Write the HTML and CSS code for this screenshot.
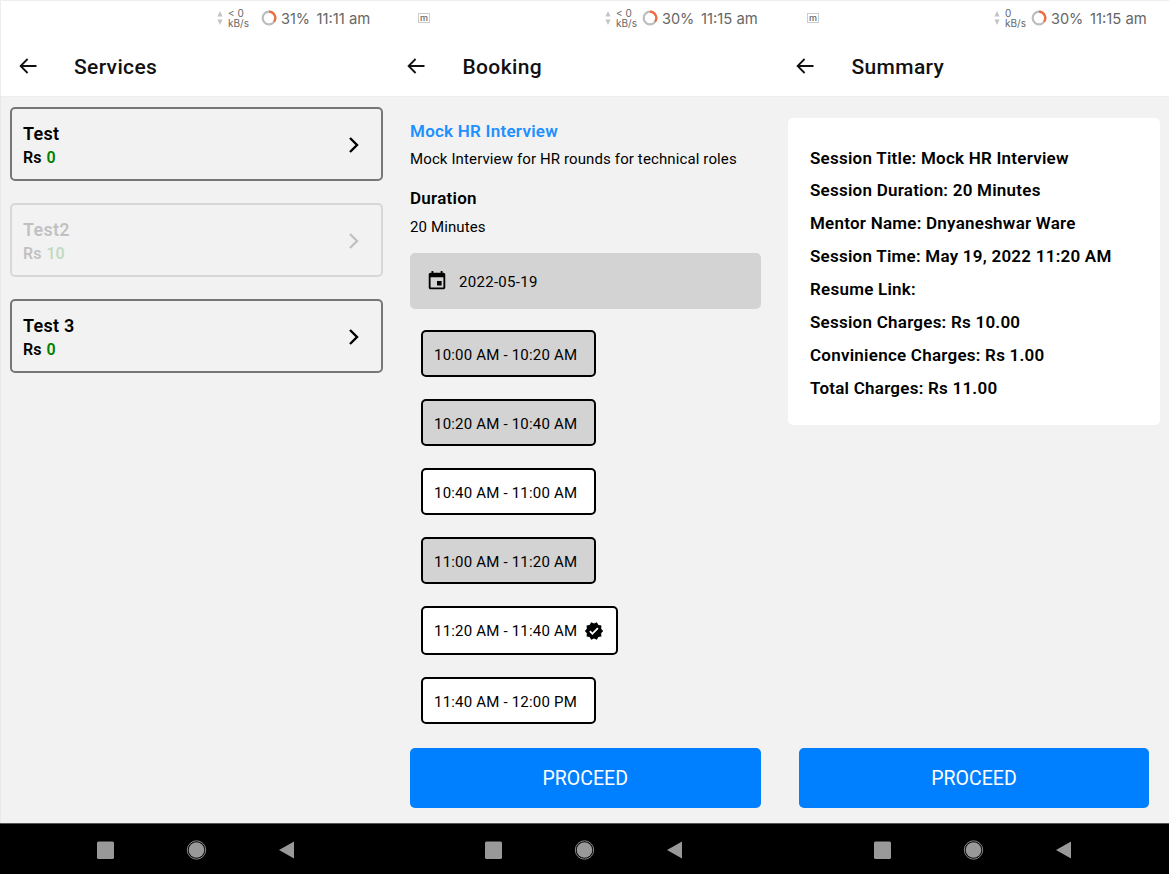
FILE: index.html
```html
<!DOCTYPE html>
<html lang="en">
<head>
<meta charset="utf-8">
<title>Session booking</title>
<link rel="stylesheet" href="styles.css">
</head>
<body>
<svg class="defs" width="0" height="0">
  <symbol id="back" viewBox="0 0 18 16"><path d="M17.500 8H1.6M8.6 1 1.6 8l7 7" fill="none" stroke="#111" stroke-width="1.8"/></symbol>
  <symbol id="chevron" viewBox="0 0 10 16"><path d="M1 1l7 7-7 7" fill="none" stroke="#000" stroke-width="2.4"/></symbol>
  <symbol id="updown" viewBox="0 0 6 14"><path d="M3 0 5.6 5.6H.4zM3 14 .4 8.4h5.2z" fill="#c4c4c4"/></symbol>
  <symbol id="ring" viewBox="0 0 16 16"><circle cx="8" cy="8" r="6.3" fill="none" stroke="#bdbdbd" stroke-width="2.2"/><path d="M8 1.7A6.3 6.3 0 0 1 13.1 11.7" fill="none" stroke="#ee6c40" stroke-width="2.2"/></symbol>
  <symbol id="event" viewBox="0 0 24 24"><path d="M17 12h-5v5h5v-5zM16 1v2H8V1H6v2H5c-1.11 0-2 .9-2 2v14c0 1.1.89 2 2 2h14c1.1 0 2-.9 2-2V5c0-1.1-.9-2-2-2h-1V1h-2zm3 18H5V8h14v11z"/></symbol>
  <symbol id="verified" viewBox="0 0 24 24"><path d="M23 12l-2.44-2.79.34-3.69-3.61-.82-1.89-3.2L12 2.96 8.6 1.5 6.71 4.69 3.1 5.5l.34 3.7L1 12l2.44 2.79-.34 3.7 3.61.82L8.6 22.5l3.4-1.47 3.4 1.46 1.89-3.19 3.61-.82-.34-3.69L23 12zm-12.91 4.72l-3.8-3.81 1.48-1.48 2.32 2.33 5.85-5.87 1.48 1.48-7.33 7.35z"/></symbol>
  <symbol id="nav" viewBox="0 0 202 22"><rect x="1" y="2.5" width="17" height="17.500" rx="1.500" fill="#999"/><circle cx="100.500" cy="11" r="9.200" fill="none" stroke="#888" stroke-width="1"/><circle cx="100.500" cy="11" r="7.800" fill="#999"/><path d="M183 11 198 2.500v17z" fill="#999"/></symbol>
</svg>
<main class="screens">
  <section class="screen first">
    <div class="status"><svg class="updown"><use href="#updown"/></svg><span class="rate">&lt; 0<br>kB/s</span><svg class="ring"><use href="#ring"/></svg><span class="battery">31%</span><span class="clock">11:11 am</span></div>
    <header class="appbar"><svg class="back"><use href="#back"/></svg><h1>Services</h1></header>
    <div class="content services">
      <article class="service"><div><h2>Test</h2><p>Rs <b>0</b></p></div><svg class="chevron"><use href="#chevron"/></svg></article>
      <article class="service disabled"><div><h2>Test2</h2><p>Rs <b>10</b></p></div><svg class="chevron"><use href="#chevron"/></svg></article>
      <article class="service"><div><h2>Test 3</h2><p>Rs <b>0</b></p></div><svg class="chevron"><use href="#chevron"/></svg></article>
    </div>
    <nav class="navbar"><svg><use href="#nav"/></svg></nav>
  </section>
  <section class="screen">
    <div class="status"><span class="notice">m</span><svg class="updown"><use href="#updown"/></svg><span class="rate">&lt; 0<br>kB/s</span><svg class="ring"><use href="#ring"/></svg><span class="battery">30%</span><span class="clock">11:15 am</span></div>
    <header class="appbar"><svg class="back"><use href="#back"/></svg><h1>Booking</h1></header>
    <div class="content booking">
      <h2 class="name">Mock HR Interview</h2>
      <p class="about">Mock Interview for HR rounds for technical roles</p>
      <h2 class="label">Duration</h2>
      <p class="length">20 Minutes</p>
      <div class="date"><svg><use href="#event"/></svg><span>2022-05-19</span></div>
      <div class="slots">
        <div class="slot taken"><span>10:00 AM - 10:20 AM</span></div>
        <div class="slot taken"><span>10:20 AM - 10:40 AM</span></div>
        <div class="slot"><span>10:40 AM - 11:00 AM</span></div>
        <div class="slot taken"><span>11:00 AM - 11:20 AM</span></div>
        <div class="slot selected"><span>11:20 AM - 11:40 AM</span><svg><use href="#verified"/></svg></div>
        <div class="slot"><span>11:40 AM - 12:00 PM</span></div>
      </div>
      <button class="proceed">PROCEED</button>
    </div>
    <nav class="navbar"><svg><use href="#nav"/></svg></nav>
  </section>
  <section class="screen">
    <div class="status"><span class="notice">m</span><svg class="updown"><use href="#updown"/></svg><span class="rate">0<br>kB/s</span><svg class="ring"><use href="#ring"/></svg><span class="battery">30%</span><span class="clock">11:15 am</span></div>
    <header class="appbar"><svg class="back"><use href="#back"/></svg><h1>Summary</h1></header>
    <div class="content summary">
      <div class="details">
        <p>Session Title: Mock HR Interview</p>
        <p>Session Duration: 20 Minutes</p>
        <p>Mentor Name: Dnyaneshwar Ware</p>
        <p>Session Time: May 19, 2022 11:20 AM</p>
        <p>Resume Link:</p>
        <p>Session Charges: Rs 10.00</p>
        <p>Convinience Charges: Rs 1.00</p>
        <p>Total Charges: Rs 11.00</p>
      </div>
      <button class="proceed">PROCEED</button>
    </div>
    <nav class="navbar"><svg><use href="#nav"/></svg></nav>
  </section>
</main>
</body>
</html>
```
FILE: styles.css
```css
* { box-sizing: border-box; }
body { margin: 0; width: 1169px; height: 874px; overflow: hidden; font-family: Roboto, "Liberation Sans", sans-serif; color: #000; background: #f2f2f2; }
h1, h2, p { margin: 0; }
svg { display: block; flex: none; }
.defs { position: absolute; }
.screens { display: grid; grid-template-columns: 388.5px 389px 391.5px; height: 874px; }
.screen { display: grid; grid-template-rows: 36px 60px 727px 51px; min-width: 0; }
.status { display: flex; align-items: center; padding-left: 217px; background: #fff; border-top: 1px solid #eee; color: #666; font-family: Inter, Roboto, sans-serif; }
.first .status, .first .appbar { border-left: 1px solid #eee; padding-left: 216px; }
.screen:not(.first) .status { padding-left: 29.5px; }
.notice { width: 12px; height: 10px; margin: -2px 175px 0 0; border: 1px solid #ccc; font-size: 9px; line-height: 7px; text-align: center; font-weight: 500; }
.updown { width: 6px; height: 14px; margin-top: -2px; }
.rate { width: 34px; padding-left: 5px; font-size: 10px; line-height: 10px; white-space: nowrap; margin-top: -1px; }
.ring { width: 16px; height: 16px; margin: -2px 0 0 4px; }
.screen:not(.first) .ring { margin-left: -3px; }
.battery { margin-left: 4px; width: 35.5px; font-size: 14.5px; }
.clock { font-size: 14.8px; white-space: nowrap; }
.screen:not(.first) .battery { width: 39px; }
.appbar { display: flex; align-items: center; background: #fff; }
.screen .appbar { padding-left: 18.5px; }
.first .appbar { padding-left: 17.5px; }
.back { width: 18px; height: 16px; }
.appbar h1 { margin: 2px 0 0 37.5px; font-size: 21px; line-height: 26px; font-weight: 500; letter-spacing: .35px; color: #111; }
.content { display: flex; flex-direction: column; border-top: 1px solid #eee; }
.first .content { border-left: 1px solid #e8e8e8; }
.services { padding: 10px 5.5px 0 9px; gap: 22px; }
.service { height: 74px; display: flex; justify-content: space-between; align-items: center; padding: 0 22.5px 0 11px; border: 2px solid #777; border-radius: 5px; }
.service > div { padding-top: 3px; }
.service h2 { font-size: 18px; line-height: 24px; font-weight: 600; letter-spacing: .25px; }
.service p { font-size: 16px; line-height: 24px; font-weight: 600; }
.service b { color: #008000; font-weight: 600; margin-left: 1px; }
.service.disabled { border-color: #d7d7d7; }
.disabled > * { opacity: .2; }
.chevron { width: 10px; height: 16px; margin-top: 1px; }
.booking { padding: 22px 17px 15.5px 21.500px; }
.booking h2 { font-size: 17px; line-height: 24px; font-weight: 600; letter-spacing: .25px; }
.booking .name { color: #1e90ff; }
.booking p { font-size: 15px; line-height: 20px; letter-spacing: .12px; white-space: nowrap; }
.about { margin: 6px 0 17px; }
.booking .length { margin: 7px 0 15.5px; }
.date { height: 56px; flex: none; display: flex; align-items: center; gap: 11px; padding-left: 16px; border-radius: 5px; background: #d3d3d3; font-size: 15px; letter-spacing: .3px; }
.date span { padding-top: 2px; }
.date svg { width: 22px; height: 22px; }
.slots { display: flex; flex-direction: column; align-items: flex-start; gap: 22px; margin: 21.8px 0 22px 11px; }
.slot { width: 175px; height: 47px; display: flex; align-items: center; gap: 7px; padding-left: 11px; border: 2px solid #000; border-radius: 5px; background: #fff; font-size: 15px; letter-spacing: .2px; white-space: nowrap; }
.slot span { padding-top: 2px; }
.slot.taken { background: #d3d3d3; }
.slot.selected { width: 197px; height: 49px; }
.slot.selected span { padding-top: 0; }
.slot svg { width: 20px; height: 20px; }
.proceed { flex: none; height: 60px; margin-top: auto; padding: 2px 0 0; border: 0; border-radius: 5px; background: #007fff; color: #fff; font: 400 19.5px Roboto, sans-serif; }
.summary { padding: 21px 9px 15.5px 10.500px; }
.details { height: 307px; padding: 23.5px 22px; border-radius: 5px; background: #fff; font-size: 17px; line-height: 32.860px; font-weight: 600; letter-spacing: .24px; white-space: nowrap; }
.summary .proceed { margin-left: 11px; margin-right: 11px; }
.navbar { background: #000; border-top: 1px solid #555; padding: 15px 0 0 96px; }
.screen:not(.first) .navbar { padding-left: 95.5px; }
.navbar svg { width: 202px; height: 22px; }
```
